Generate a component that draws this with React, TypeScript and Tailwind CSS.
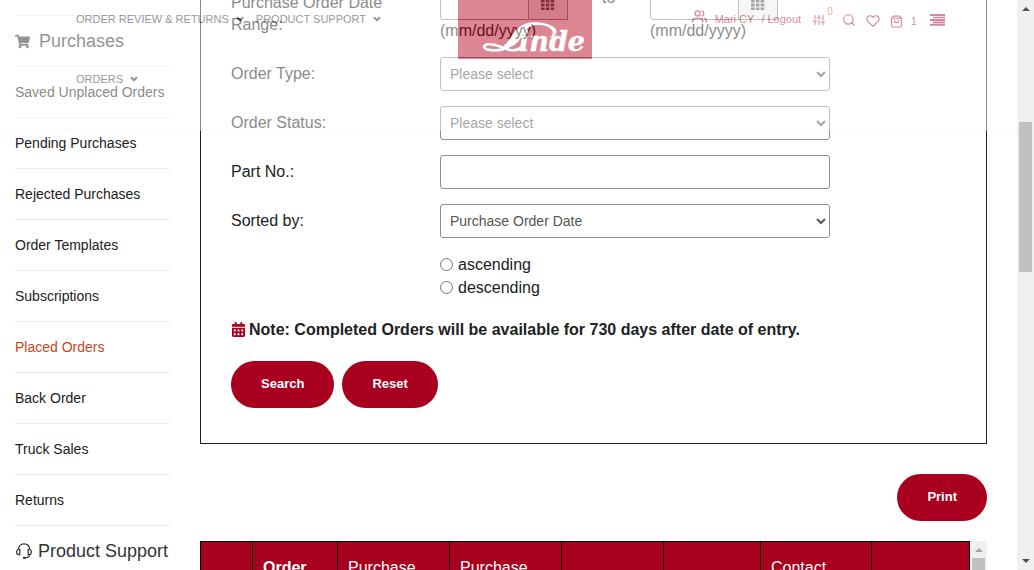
import type { ReactNode } from "react";
import { FaCalendarAlt, FaShoppingCart } from "react-icons/fa";
import { FiHeart, FiSearch, FiShoppingBag, FiSliders, FiUsers, FiChevronDown } from "react-icons/fi";

const sidebarItems = [
  "Saved Unplaced Orders",
  "Pending Purchases",
  "Rejected Purchases",
  "Order Templates",
  "Subscriptions",
  "Placed Orders",
  "Back Order",
  "Truck Sales",
  "Returns",
];

const columns = [
  { label: "", width: 52, bold: false },
  { label: "Order", width: 85, bold: true },
  { label: "Purchase", width: 112, bold: false },
  { label: "Purchase", width: 112, bold: false },
  { label: "", width: 102, bold: false },
  { label: "", width: 97, bold: false },
  { label: "Contact", width: 111, bold: false },
  { label: "", width: 98, bold: false },
];
const totalWidth = columns.reduce((sum, column) => sum + column.width, 0);

const fieldClass =
  "h-[34px] w-full rounded-[3px] border border-[#8d8d92] bg-white text-sm text-[#555]";

function HeadsetIcon() {
  return (
    <svg className="size-[18px] shrink-0" viewBox="0 0 18 18" fill="none" stroke="#333" strokeWidth="1.2" aria-hidden="true">
      <path d="M3.5 7.5C3.5 4 5.8 1.8 9 1.8S14.500 4 14.500 7.500" />
      <path d="M4.800 7.500H3.500C2.300 7.500 1.700 8.500 1.700 10S2.300 12.600 3.500 12.600H4.800ZM13.200 7.500H14.500C15.700 7.500 16.300 8.500 16.300 10S15.700 12.600 14.500 12.600H13.200Z" />
      <path d="M14.500 12.600C14.500 14.800 13 15.800 10.500 15.800" />
      <path d="M8 15.800H10.800" strokeWidth="2" />
    </svg>
  );
}

function GridIcon() {
  return (
    <svg className="h-[14px] w-[14px]" viewBox="0 0 14 14" fill="#555" aria-hidden="true">
      {[-0.5, 3.5, 7.5, 11.5].map((y) => [0, 4.8, 9.6].map((x) => <rect key={`${x}-${y}`} x={x} y={y} width="3.6" height="2.900" />))}
    </svg>
  );
}

function MenuIcon() {
  return (
    <svg className="h-[12px] w-[16px]" viewBox="0 0 16 12" fill="currentColor" aria-hidden="true">
      <path d="M0 0H15V2H0ZM3 2.700H15V4.300H3ZM0 5H15V7H0ZM3 7.500H15V9.200H3ZM0 9.800H15V11.800H0Z" />
    </svg>
  );
}

function Logo() {
  return (
    <svg className="h-[59px] w-[134px] shrink-0" viewBox="0 0 134 59" role="img" aria-label="Linde">
      <rect width="134" height="59" fill="#b8001b" />
      <text x="61" y="50.5" fill="#fff" stroke="#fff" strokeWidth="0.4" fontFamily="DejaVu Serif" fontWeight="700" fontStyle="italic" fontSize="27">
        inde
      </text>
      <path
        d="M44 47C50 43 52 38 56 33C61 26 68 22 77 22.300C88 22.500 99 26 98.500 32C98.200 35.500 95 37.500 91 37.800C94 36 95 34 94.500 31.500C93 26.500 85 24.700 78 25C70 25.500 67 31 64 36C61 41 57 46 51 47.500Z"
        fill="#fff"
      />
      <path
        d="M52 45C47 49.500 39 51 32 50C25 49 24 45.300 30 44.300C38 43.300 45 48.500 52 50C57 51 61 49.500 64 46.500"
        fill="none"
        stroke="#fff"
        strokeWidth="2.600"
      />
    </svg>
  );
}

function Header() {
  return (
    <header className="absolute inset-x-0 top-0 flex h-[131px] items-start border-b border-[#f2f2f2] bg-white text-[11px] text-[#222] opacity-[0.47]">
      <nav className="-mt-[11px] flex w-[45%] flex-wrap gap-x-[11px] pr-[60px] pl-[76px] leading-[60px]">
        {["Order Review & Returns", "Product Support", "Orders"].map((label) => (
          <a key={label} href="#" className="flex items-center gap-[6px] uppercase">
            {label}
            <FiChevronDown className="size-[10px]" strokeWidth={5} />
          </a>
        ))}
      </nav>
      <Logo />
      <div className="flex h-[40px] flex-1 items-center pl-[100px] text-[#b0002a]">
        <a href="#" className="flex items-center gap-2">
          <FiUsers className="mb-2 size-[15px] shrink-0" />
          <span className="pb-[2px] whitespace-pre">Mari CY</span>
        </a>
        <a href="#" className="ml-[7px] pb-[2px] whitespace-nowrap">/ Logout</a>
        <a href="#" className="ml-[12px] flex items-center" aria-label="Compare">
          <FiSliders className="size-[12px]" />
          <span className="pb-[18px] pl-[2px] text-[10px] text-[#d9531e]">0</span>
        </a>
        <button type="button" aria-label="Find" className="ml-[9px]">
          <FiSearch className="size-[14px]" />
        </button>
        <a href="#" aria-label="Favorites" className="ml-[10px] pt-[2px]">
          <FiHeart className="size-[14px]" />
        </a>
        <a href="#" aria-label="Cart" className="ml-[10px] flex items-center gap-[8px] pt-[2px]">
          <FiShoppingBag className="size-[13px]" />
          <span>1</span>
        </a>
        <button type="button" aria-label="Menu" className="ml-[13px]">
          <MenuIcon />
        </button>
      </div>
    </header>
  );
}

function Row({ label, htmlFor, children }: { label: string; htmlFor: string; children: ReactNode }) {
  return (
    <div className="mb-[15px] flex">
      <label htmlFor={htmlFor} className="w-[209px] shrink-0 pt-[6px] pr-[50px] leading-[22px]">
        {label}
      </label>
      <div className="w-[390px]">{children}</div>
    </div>
  );
}

function DateField({ id, label }: { id: string; label: string }) {
  return (
    <div>
      <div className="flex h-[34px] w-[128px]">
        <input id={id} type="text" aria-label={label} className="w-[89px] rounded-l-[3px] border border-[#8d8d92] bg-white px-2 text-sm" />
        <button type="button" aria-label={`${label} calendar`} className="-ml-px flex flex-1 items-center justify-center border border-[#8d8d92] bg-[#eee]">
          <GridIcon />
        </button>
      </div>
      <div className="leading-[22px]">(mm/dd/yyyy)</div>
    </div>
  );
}

function PillButton({ children }: { children: ReactNode }) {
  return (
    <button type="button" className="h-[47px] rounded-full bg-[#a8001e] px-[30px] pb-[2px] text-[13px] font-bold text-white">
      {children}
    </button>
  );
}

function Arrow({ up, color }: { up?: boolean; color: string }) {
  return (
    <svg className="h-[4px] w-[8px]" viewBox="0 0 8 4" fill={color} aria-hidden="true">
      <path d={up ? "M0 4L4 0L8 4Z" : "M0 0L4 4L8 0Z"} />
    </svg>
  );
}

export default function App() {
  return (
    <div className="relative flex h-screen overflow-hidden bg-white font-['Liberation_Sans',sans-serif] text-base leading-[23px] text-[#212121]">
      <div className="relative flex-1 overflow-hidden">
        <div className="flex">
          <aside className="ml-[15px] w-[155px] shrink-0 pt-[15px]">
            <h2 className="flex h-[52px] items-center gap-[9px] border-y border-[#ebebeb] text-lg text-[#333]">
              <FaShoppingCart className="size-[15px]" />
              Purchases
            </h2>
            <ul className="text-sm">
              {sidebarItems.map((item) => (
                <li key={item} className="h-[51px] border-b border-[#ebebeb]">
                  <a href="#" className={item === "Placed Orders" ? "flex h-full items-center text-[#c4471d]" : "flex h-full items-center"}>
                    {item}
                  </a>
                </li>
              ))}
            </ul>
            <h2 className="flex h-[50px] items-center gap-[5px] text-lg whitespace-nowrap text-[#333]">
              <HeadsetIcon />
              Product Support
            </h2>
          </aside>

          <main className="mr-[30px] ml-[30px] min-w-0 flex-1">
            <form className="-mt-[45px] border border-[#212121] px-[30px] pt-[30px] pb-[35px]">
              <Row label="Purchase Order Date Range:" htmlFor="from">
                <div className="flex">
                  <DateField id="from" label="From date" />
                  <span className="w-[82px] pl-[34px]">to</span>
                  <DateField id="until" label="To date" />
                </div>
              </Row>
              <Row label="Order Type:" htmlFor="type">
                <select id="type" className={`${fieldClass} px-[5px]`}>
                  <option>Please select</option>
                </select>
              </Row>
              <Row label="Order Status:" htmlFor="status">
                <select id="status" className={`${fieldClass} px-[5px]`}>
                  <option>Please select</option>
                </select>
              </Row>
              <Row label="Part No.:" htmlFor="part">
                <input id="part" type="text" className={`${fieldClass} block px-[9px]`} />
              </Row>
              <Row label="Sorted by:" htmlFor="sort">
                <select id="sort" className={`${fieldClass} px-[5px]`}>
                  <option>Purchase Order Date</option>
                </select>
              </Row>
              <div className="ml-[209px]">
                {["ascending", "descending"].map((direction) => (
                  <label key={direction} className="flex items-center gap-[5px]">
                    <input type="radio" name="direction" className="size-[13px]" />
                    {direction}
                  </label>
                ))}
              </div>
              <p className="mt-[19px] flex items-center gap-[3px] font-bold">
                <FaCalendarAlt className="size-[15px] shrink-0 text-[#a8001e]" />
                Note: Completed Orders will be available for 730 days after date of entry.
              </p>
              <div className="mt-5 flex gap-[8px]">
                <PillButton>Search</PillButton>
                <PillButton>Reset</PillButton>
              </div>
            </form>

            <div className="mt-[30px] flex justify-end">
              <PillButton>Print</PillButton>
            </div>

            <div className="mt-5 flex">
              <table className="min-w-0 flex-1 table-fixed border-collapse bg-[#a8001e] text-left text-white">
                <colgroup>
                  {columns.map((column, index) => (
                    <col key={index} style={{ width: `${(column.width / totalWidth) * 100}%` }} />
                  ))}
                </colgroup>
                <thead>
                  <tr>
                    {columns.map((column, index) => (
                      <th
                        key={index}
                        scope="col"
                        className={
                          column.bold
                            ? "h-[60px] border border-black px-[10px] pt-[14px] align-top font-bold"
                            : "h-[60px] border border-black px-[10px] pt-[14px] align-top font-normal"
                        }
                      >
                        {column.label}
                      </th>
                    ))}
                  </tr>
                </thead>
              </table>
              <div className="flex w-[17px] flex-col items-center bg-[#f0f0f0] pt-[7px]" aria-hidden="true">
                <Arrow up color="#a3a3a3" />
                <div className="mt-[6px] w-[13px] flex-1 bg-[#c1c1c1]" />
              </div>
            </div>
          </main>
        </div>
        <Header />
      </div>

      <div className="flex w-[17px] shrink-0 flex-col items-center bg-[#f0f0f0] py-[7px]" aria-hidden="true">
        <Arrow up color="#505050" />
        <div className="mt-[111px] mb-auto h-[150px] w-[13px] bg-[#c1c1c1]" />
        <Arrow color="#505050" />
      </div>
    </div>
  );
}
